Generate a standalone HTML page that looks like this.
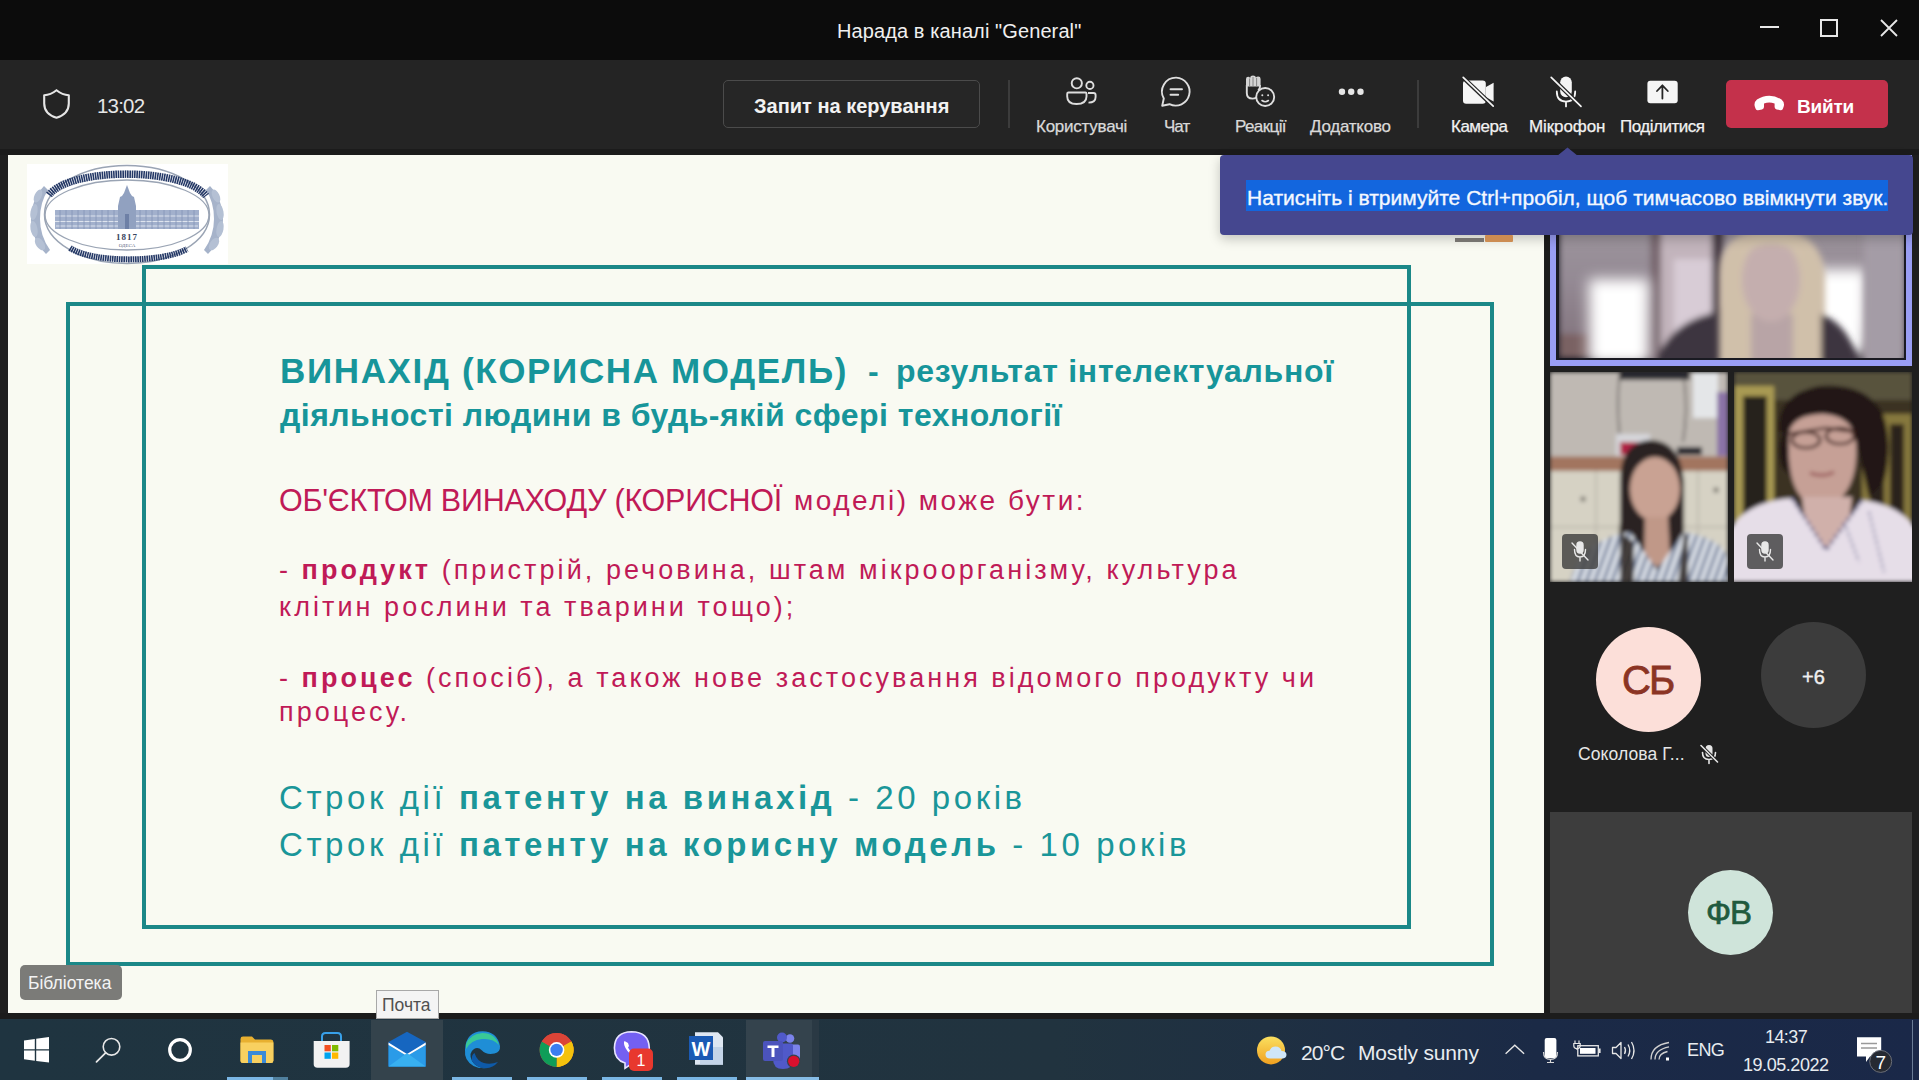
<!DOCTYPE html>
<html><head><meta charset="utf-8">
<style>
*{margin:0;padding:0;box-sizing:border-box}
html,body{width:1919px;height:1080px;overflow:hidden;background:#1f1f1f;font-family:"Liberation Sans",sans-serif;position:relative}
.a{position:absolute}
.t{position:absolute;white-space:nowrap;line-height:1}
svg{position:absolute;overflow:visible}
.lbl{color:#d9d9d9;font-size:17px;top:118px;-webkit-text-stroke:0.25px currentColor}
.teal{color:#17959a;font-weight:700}
.pink{color:#c01a57;font-size:27px;letter-spacing:3.05px}
.str{color:#1a9699;font-size:33px;letter-spacing:3.57px}
</style></head><body>
<!-- title bar -->
<div class="a" style="left:0;top:0;width:1919px;height:60px;background:#0c0c0c"></div>
<div class="t" style="left:837px;top:21px;font-size:20px;color:#f0f0f0;letter-spacing:0.1px">Нарада в каналі "General"</div>
<div class="a" style="left:1760px;top:26px;width:19px;height:2px;background:#e8e8e8"></div>
<div class="a" style="left:1820px;top:19px;width:18px;height:18px;border:2px solid #e8e8e8"></div>
<svg style="left:1880px;top:19px" width="18" height="18" viewBox="0 0 18 18"><path d="M1 1L17 17M17 1L1 17" stroke="#e8e8e8" stroke-width="1.8"/></svg>

<!-- toolbar -->
<div class="a" style="left:0;top:60px;width:1919px;height:89px;background:#242424"></div>
<div class="a" style="left:0;top:149px;width:1919px;height:6px;background:#1b1b1b"></div>
<svg style="left:43px;top:89px" width="27" height="30" viewBox="0 0 27 30"><path d="M13.5 1.2C9.5 4.4 5.5 6 1.2 6.2V14.5C1.2 21.5 5.4 26.3 13.5 28.8C21.6 26.3 25.8 21.5 25.8 14.5V6.2C21.5 6 17.5 4.4 13.5 1.2Z" fill="none" stroke="#e6e6e6" stroke-width="2.1" stroke-linejoin="round"/></svg>
<div class="t" style="left:97px;top:96px;font-size:20.5px;color:#e6e6e6;letter-spacing:-0.8px">13:02</div>
<div class="a" style="left:723px;top:80px;width:257px;height:48px;border:1.5px solid #4b4b4b;border-radius:5px;background:#262626"></div>
<div class="t" style="left:754px;top:96px;font-size:20px;color:#f2f2f2;font-weight:700">Запит на керування</div>
<div class="a" style="left:1008px;top:80px;width:2px;height:48px;background:#3c3c3c"></div>
<div class="a" style="left:1417px;top:80px;width:2px;height:48px;background:#3c3c3c"></div>

<div class="t lbl" style="left:1036px;letter-spacing:-0.25px">Користувачі</div>
<div class="t lbl" style="left:1164px;letter-spacing:-1px">Чат</div>
<div class="t lbl" style="left:1235px;letter-spacing:-0.6px">Реакції</div>
<div class="t lbl" style="left:1310px;letter-spacing:-0.25px">Додатково</div>
<div class="t lbl" style="left:1451px;letter-spacing:-0.5px;color:#f2f2f2">Камера</div>
<div class="t lbl" style="left:1529px;letter-spacing:-0.1px;color:#f2f2f2">Мікрофон</div>
<div class="t lbl" style="left:1620px;letter-spacing:-0.5px;color:#f2f2f2">Поділитися</div>

<!-- leave button -->
<div class="a" style="left:1726px;top:80px;width:162px;height:48px;background:#c4314b;border-radius:5px"></div>
<div class="t" style="left:1797px;top:97px;font-size:19px;color:#fff;font-weight:700;letter-spacing:-0.2px">Вийти</div>


<!-- toolbar icons -->
<svg style="left:0;top:0" width="1919" height="160" viewBox="0 0 1919 160">
 <g fill="none" stroke="#dedede" stroke-width="1.9">
  <circle cx="1076.8" cy="83.3" r="5.1"/>
  <circle cx="1089.9" cy="85.4" r="3.6"/>
  <path d="M1068.5 92.5H1085.3Q1086.5 92.5 1086.5 93.7V96.5Q1086.5 104 1076.5 104Q1067.2 104 1067.2 96.5V93.7Q1067.2 92.5 1068.5 92.5Z"/>
  <path d="M1088 93H1093.5Q1095.6 93 1095.6 95V97Q1095.6 102.6 1088.5 102.6"/>
  <path d="M1176.2 77.6A14 14 0 1 1 1169.5 104.2L1162.2 105.8L1163.8 98.5A14 14 0 0 1 1176.2 77.6Z" stroke-linejoin="round"/>
  <path d="M1170.5 89.3H1182M1170.5 94.8H1178.2" stroke-linecap="round"/>
  <circle cx="1265.2" cy="97" r="9"/>
  <path d="M1262 100.5Q1265.2 103 1268.4 100.5" stroke-linecap="round" stroke-width="1.6"/>
  <path d="M1246.8 85V93Q1246.8 98.6 1252.5 98.6Q1254.6 98.6 1256.2 97.6M1259.9 85V87.2Q1259.9 88.6 1258.2 90.2"/>
 </g>
 <path d="M1246 79Q1246 76.8 1248.2 76.8Q1249.8 76.8 1250 78Q1250.3 75.6 1253 75.6Q1255.6 75.6 1256 77.6Q1256.4 76.6 1258.2 76.6Q1260.6 76.6 1260.6 79V86.5H1246Z" fill="#d4d4d4"/>
 <path d="M1249.6 78.5V86.5M1253 77V86.5M1256.6 78V86.5" stroke="#7a7a7a" stroke-width="0.9"/>
 <circle cx="1262.3" cy="95.3" r="1" fill="#dedede"/><circle cx="1268.1" cy="95.3" r="1" fill="#dedede"/>
 <g fill="#e6e6e6"><circle cx="1342" cy="91.7" r="3.2"/><circle cx="1351.2" cy="91.7" r="3.2"/><circle cx="1360.5" cy="91.7" r="3.2"/></g>
 <!-- camera off -->
 <g fill="#f5f5f5">
  <rect x="1463" y="80.4" width="22.8" height="23.4" rx="3.2"/>
  <path d="M1486 87L1493.6 82.8V101.4L1486 97.2Z"/>
 </g>
 <path d="M1462 76.5L1494 107" stroke="#242424" stroke-width="4.2"/>
 <path d="M1463.2 77.3L1493.2 106.2" stroke="#f5f5f5" stroke-width="1.7" stroke-linecap="round"/>
 <!-- mic off -->
 <rect x="1560.2" y="76.5" width="11.6" height="20.8" rx="5.8" fill="#f5f5f5"/>
 <path d="M1556.8 91.5Q1556.8 101.6 1566 101.6Q1575.2 101.6 1575.2 91.5M1566 101.6V106.4" fill="none" stroke="#f5f5f5" stroke-width="1.8" stroke-linecap="round"/>
 <path d="M1550 76.2L1582 107.2" stroke="#242424" stroke-width="4.2"/>
 <path d="M1551.2 77.3L1581 106.4" stroke="#f5f5f5" stroke-width="1.7" stroke-linecap="round"/>
 <!-- share -->
 <rect x="1647.4" y="80.8" width="30.3" height="22.4" rx="3" fill="#f5f5f5"/>
 <path d="M1662.4 98.6V85.5M1657 91L1662.4 85.4L1667.8 91" fill="none" stroke="#242424" stroke-width="1.8" stroke-linecap="round" stroke-linejoin="round"/>
 <!-- hang up -->
 <path d="M1754.8 106.5Q1753.6 102.5 1757 99.6Q1762.5 95.8 1769.3 95.8Q1776 95.8 1781.5 99.6Q1784.9 102.5 1783.7 106.5L1783 108.6Q1782.5 110.5 1780.5 110.2L1776.6 109.4Q1774.6 109 1774.6 107V103.6Q1771.8 102.6 1769.3 102.6Q1766.7 102.6 1764 103.6V107Q1764 109 1762 109.4L1758 110.2Q1756 110.5 1755.5 108.6Z" fill="#ffffff"/>
</svg>

<!-- slide -->
<div class="a" style="left:8px;top:155px;width:1536px;height:858px;background:#f9faf2"></div>
<div class="a" style="left:142px;top:265px;width:1269px;height:664px;border:4.5px solid #1b8888"></div>
<div class="a" style="left:66px;top:302px;width:1428px;height:664px;border:4px solid #1b8888"></div>


<!-- logo -->
<div class="a" style="left:27px;top:164px;width:201px;height:100px;background:#ffffff"></div>
<svg style="left:0;top:0" width="260" height="280" viewBox="0 0 260 280">
 <g fill="#a6b3ca">
  <path d="M44 186Q31 200 31 220Q32 240 46 254L50 250Q40 236 40 219Q40 202 48 190Z"/>
  <path d="M210 186Q223 200 223 220Q222 240 208 254L204 250Q214 236 214 219Q214 202 206 190Z"/>
 </g>
 <g fill="#b4c0d4">
  <ellipse cx="38" cy="196" rx="3.5" ry="7" transform="rotate(25 38 196)"/><ellipse cx="34" cy="212" rx="3.5" ry="8" transform="rotate(10 34 212)"/><ellipse cx="34" cy="229" rx="3.5" ry="8" transform="rotate(-10 34 229)"/><ellipse cx="40" cy="244" rx="4" ry="7" transform="rotate(-35 40 244)"/>
  <ellipse cx="216" cy="196" rx="3.5" ry="7" transform="rotate(-25 216 196)"/><ellipse cx="220" cy="212" rx="3.5" ry="8" transform="rotate(-10 220 212)"/><ellipse cx="220" cy="229" rx="3.5" ry="8" transform="rotate(10 220 229)"/><ellipse cx="214" cy="244" rx="4" ry="7" transform="rotate(35 214 244)"/>
 </g>
 <ellipse cx="127" cy="214.5" rx="82.5" ry="49" fill="none" stroke="#9aa4b4" stroke-width="1.5"/>
 <path d="M49 195C70 167 184 167 206 196" fill="none" stroke="#243866" stroke-width="7.5" stroke-dasharray="1.6 0.7"/>
 <path d="M70 248C92 263 163 263 187 249" fill="none" stroke="#243866" stroke-width="6" stroke-dasharray="1.6 0.7"/>
 <ellipse cx="127" cy="215" rx="82" ry="35" fill="none" stroke="#9aa4b4" stroke-width="1.3"/>
 <rect x="55" y="210" width="144" height="19" fill="#a2b0cc"/>
 <g stroke="#e4eaf2" stroke-width="0.9"><path d="M55 216H199M55 221.5H199M56 226H198"/></g>
 <g stroke="#8496b8" stroke-width="0.8"><path d="M60 210V229M66 210V229M72 210V229M78 210V229M84 210V229M90 210V229M96 210V229M102 210V229M108 210V229M114 210V229M140 210V229M146 210V229M152 210V229M158 210V229M164 210V229M170 210V229M176 210V229M182 210V229M188 210V229M194 210V229"/></g>
 <path d="M118 229V206L120 197L122 196L124 193L127 185L130 193L132 196L134 197L136 206V229Z" fill="#91a1c0"/>
 <rect x="125" y="214" width="4" height="15" fill="#6e80a6"/>
 <text x="127" y="240" font-family="Liberation Serif" font-size="9" font-weight="700" fill="#3a4660" text-anchor="middle" letter-spacing="1">1817</text>
 <text x="127" y="246.5" font-family="Liberation Serif" font-size="5" fill="#5a6680" text-anchor="middle">ОДЕСА</text>
</svg>
<div class="t teal" style="left:280px;top:352.6px;font-size:35px;letter-spacing:1.65px">ВИНАХІД (КОРИСНА МОДЕЛЬ)</div>
<div class="t teal" style="left:868px;top:354.9px;font-size:32px">-</div>
<div class="t teal" style="left:896px;top:354.9px;font-size:32px;letter-spacing:0.72px">результат інтелектуальної</div>
<div class="t teal" style="left:280px;top:399.4px;font-size:32px;letter-spacing:0.47px">діяльності людини в будь-якій сфері технології</div>

<div class="t" style="left:279px;top:484.7px;font-size:30.5px;color:#c01a57;letter-spacing:-0.25px">ОБ'ЄКТОМ ВИНАХОДУ (КОРИСНОЇ</div>
<div class="t" style="left:794px;top:486.8px;font-size:28px;color:#c01a57;letter-spacing:2.5px">моделі) може бути:</div>
<div class="t pink" style="left:279px;top:557.3px">- <b>продукт</b> (пристрій, речовина, штам мікроорганізму, культура</div>
<div class="t pink" style="left:279px;top:593.8px">клітин рослини та тварини тощо);</div>
<div class="t pink" style="left:279px;top:664.8px">- <b>процес</b> (спосіб), а також нове застосування відомого продукту чи</div>
<div class="t pink" style="left:279px;top:699.4px">процесу.</div>
<div class="t str" style="left:279px;top:781px">Строк дії <b>патенту на винахід</b> - 20 років</div>
<div class="t str" style="left:279px;top:828.1px">Строк дії <b>патенту на корисну модель</b> - 10 років</div>


<!-- right panel -->
<div class="a" style="left:1545px;top:155px;width:374px;height:864px;background:#1f1f1f"></div>
<div class="a" style="left:1545px;top:155px;width:5px;height:858px;background:#1b1b1b"></div>
<!-- top video tile -->
<div class="a" style="left:1550px;top:155px;width:362px;height:211px;background:#9a9ef4"></div>
<div class="a" style="left:1556px;top:161px;width:350px;height:199px;background:#1a1a22"></div>
<svg style="left:1559px;top:164px;overflow:hidden" width="345" height="194" viewBox="0 0 345 194">
 <defs><filter id="b0" x="-20%" y="-20%" width="140%" height="140%"><feGaussianBlur stdDeviation="3"/></filter>
 <filter id="b0s" x="-50%" y="-50%" width="200%" height="200%"><feGaussianBlur stdDeviation="7"/></filter>
 <linearGradient id="wall0" x1="0" y1="0" x2="0" y2="1"><stop offset="0" stop-color="#a8a2a8"/><stop offset="0.6" stop-color="#948a94"/><stop offset="1" stop-color="#80707a"/></linearGradient></defs>
 <g filter="url(#b0)">
  <rect width="345" height="194" fill="url(#wall0)"/>
  <rect x="0" y="170" width="30" height="24" fill="#7a6264"/>
  <rect x="91" y="60" width="11" height="140" fill="#786870"/>
  <rect x="102" y="60" width="54" height="140" fill="#c2b4bc"/>
  <rect x="115" y="95" width="40" height="80" fill="#d8ccd6"/>
  <rect x="153" y="60" width="12" height="140" fill="#463a44"/>
  <path d="M95 200Q110 160 150 150L175 140H280Q300 150 310 200Z" fill="#3e3440"/>
 </g>
 <g filter="url(#b0s)">
  <rect x="30" y="115" width="60" height="85" fill="#ffffff"/>
  <rect x="252" y="105" width="56" height="85" fill="#ffffff"/>
 </g>
 <g filter="url(#b0)">
  <path d="M160 200V110Q160 66 212 64Q262 66 266 110V200Z" fill="#d0c0aa"/>
  <rect x="192" y="150" width="42" height="50" fill="#b8a4a6"/>
  <ellipse cx="212" cy="116" rx="29" ry="42" fill="#c4aeae"/>
  <path d="M180 100Q186 70 212 70Q240 70 246 100Q240 82 212 80Q186 82 180 100Z" fill="#d2c2ac"/>
  <rect x="305" y="60" width="40" height="140" fill="#a49ca6"/>
  <path d="M262 150Q290 160 300 200H262Z" fill="#3e3440"/>
 </g>
</svg>
<!-- tile 2 -->
<svg style="left:1550px;top:372px;overflow:hidden" width="178" height="210" viewBox="0 0 178 210">
 <defs><filter id="b1" x="-10%" y="-10%" width="120%" height="120%"><feGaussianBlur stdDeviation="1.9"/></filter>
 <pattern id="stripe" width="8" height="8" patternUnits="userSpaceOnUse" patternTransform="rotate(20)"><rect width="8" height="8" fill="#e6eaf0"/><rect width="3.5" height="8" fill="#6a7894"/></pattern></defs>
 <g filter="url(#b1)">
  <rect width="178" height="210" fill="#c2bcb6"/>
  <rect x="0" y="0" width="178" height="86" fill="#bfb9b3"/>
  <rect x="69" y="0" width="71" height="8" fill="#2c2c32"/>
  <path d="M70 0Q66 30 70 68M134 6Q138 40 133 70" stroke="#3a3636" stroke-width="1.3" fill="none"/>
  <rect x="143" y="0" width="25" height="46" fill="#e4e6e8"/>
  <rect x="167" y="20" width="11" height="64" fill="#8a72a6"/>
  <rect x="66" y="62" width="34" height="22" fill="#d6d6da"/>
  <rect x="70" y="70" width="20" height="13" fill="#b02444"/>
  <rect x="127" y="75" width="25" height="8" fill="#24242a"/>
  <rect x="0" y="84.5" width="178" height="14.5" fill="#a2745e"/>
  <rect x="0" y="99" width="178" height="111" fill="#d6d2c4"/>
  <path d="M46 99V210M148 99V210M0 155H178" stroke="#b8b4a8" stroke-width="1.5"/>
  <circle cx="33" cy="127" r="2.5" fill="#6a6660"/><circle cx="166" cy="118" r="2.5" fill="#6a6660"/>
  <path d="M70 210V110Q70 70 100 68Q130 68 134 110V210Z" fill="#2c2420"/>
  <path d="M64 210L70 150Q72 120 80 115V210Z" fill="#2c2420"/>
  <ellipse cx="105" cy="117" rx="25" ry="32" fill="#c9a293"/>
  <path d="M80 100Q88 80 108 82Q124 84 130 100V90Q124 72 104 72Q84 74 80 92Z" fill="#2c2420"/>
  <path d="M95 145H118L120 185L107 195L94 185Z" fill="#c09888"/>
  <path d="M20 210Q30 168 80 160L107 198L134 160Q170 166 178 185V210Z" fill="url(#stripe)"/>
  <path d="M70 210V160L84 170V210ZM134 160L128 210H138V165Z" fill="#2c2420" opacity="0.85"/>
 </g>
</svg>
<!-- tile 3 -->
<svg style="left:1734px;top:372px;overflow:hidden" width="178" height="210" viewBox="0 0 178 210">
 <defs><filter id="b2" x="-10%" y="-10%" width="120%" height="120%"><feGaussianBlur stdDeviation="2.3"/></filter></defs>
 <g filter="url(#b2)">
  <rect width="178" height="210" fill="#3a3224"/>
  <rect x="0" y="0" width="178" height="28" fill="#58523e"/>
  <rect x="0" y="14" width="40" height="160" fill="#a89a52"/>
  <rect x="9" y="24" width="24" height="138" fill="#28221a"/>
  <rect x="128" y="42" width="50" height="134" fill="#86783e"/>
  <rect x="136" y="52" width="14" height="115" fill="#2c241a"/>
  <rect x="156" y="52" width="14" height="115" fill="#2c241a"/>
  <path d="M45 60Q42 22 85 14Q130 10 148 40Q160 70 150 110L135 125L120 60Z" fill="#221814"/>
  <path d="M48 95Q40 70 55 50L62 110Z" fill="#221814"/>
  <path d="M55 60Q60 42 90 42Q120 44 122 72Q124 110 105 128Q88 138 70 128Q52 112 55 60Z" fill="#c6a096"/>
  <path d="M55 62L92 56L122 60" stroke="#3a1c18" stroke-width="2.5" fill="none"/>
  <ellipse cx="72" cy="68" rx="14" ry="8" fill="none" stroke="#3a1c18" stroke-width="2.6"/>
  <ellipse cx="106" cy="64" rx="14" ry="8" fill="none" stroke="#3a1c18" stroke-width="2.6"/>
  <path d="M76 101Q90 106 100 100" stroke="#9a5a5a" stroke-width="3" fill="none"/>
  <path d="M68 125H118L114 160L92 178L72 158Z" fill="#d0b0aa"/>
  <path d="M-5 210V160Q10 130 58 126L92 178L128 128Q170 134 183 160V210Z" fill="#e6dee8"/>
  <path d="M58 126L92 178L128 128" fill="none" stroke="#5a5a8a" stroke-width="3" stroke-dasharray="4 3"/>
  <path d="M110 150L125 190M135 140L150 200" stroke="#6a6a96" stroke-width="2" stroke-dasharray="3 3"/>
 </g>
</svg>
<div class="a" style="left:1562px;top:534px;width:36px;height:35px;background:rgba(60,60,60,0.8);border-radius:4px"></div>
<div class="a" style="left:1747px;top:534px;width:36px;height:35px;background:rgba(60,60,60,0.8);border-radius:4px"></div>
<svg style="left:0;top:0" width="1919" height="1080" viewBox="0 0 1919 1080">
 <g fill="none" stroke="#e8e8e8" stroke-width="1.4" stroke-linecap="round">
  <g id="mo"><rect x="1577" y="542" width="6" height="11" rx="3" fill="#e8e8e8"/><path d="M1574.5 549.5Q1574.5 557 1580 557Q1585.5 557 1585.5 549.5M1580 557V561"/><path d="M1572 543L1588 560"/></g>
  <use href="#mo" x="185"/>
 </g>
</svg>
<!-- avatars -->
<div class="a" style="left:1596px;top:627px;width:105px;height:105px;border-radius:50%;background:#fcdfd9"></div>
<div class="t" style="left:1622px;top:660px;font-size:40px;color:#8b3424;letter-spacing:-1.8px;-webkit-text-stroke:0.8px #8b3424">СБ</div>
<div class="a" style="left:1761px;top:622px;width:105px;height:106px;border-radius:50%;background:#3c3c3c"></div>
<div class="t" style="left:1802px;top:667px;font-size:20px;color:#f0f0f0;-webkit-text-stroke:0.4px #f0f0f0">+6</div>
<div class="t" style="left:1578px;top:746px;font-size:17.5px;color:#e6e6e6;letter-spacing:0.1px">Соколова Г...</div>
<svg style="left:0;top:0" width="1919" height="1080" viewBox="0 0 1919 1080">
 <g fill="none" stroke="#e6e6e6" stroke-width="1.6" stroke-linecap="round">
  <rect x="1705.5" y="745" width="7" height="12" rx="3.5" fill="#e6e6e6" stroke="none"/>
  <path d="M1702.5 752.5Q1702.5 759.5 1709 759.5Q1715.5 759.5 1715.5 752.5M1709 759.5V763.5"/>
  <path d="M1700.5 745L1718 762.5" stroke="#1f1f1f" stroke-width="3.2"/>
  <path d="M1701 745.5L1717.5 762"/>
 </g>
</svg>
<div class="a" style="left:1550px;top:812px;width:362px;height:201px;background:#3d3d3d"></div>
<div class="a" style="left:1688px;top:870px;width:85px;height:85px;border-radius:50%;background:#cfe4da"></div>
<div class="t" style="left:1706px;top:896px;font-size:33px;color:#1f5a3e;letter-spacing:-1px;-webkit-text-stroke:0.7px #1f5a3e">ФВ</div>

<!-- tooltip -->
<div class="a" style="left:1220px;top:155px;width:693px;height:80px;background:#45478f;border-radius:4px;box-shadow:0 4px 12px rgba(0,0,0,0.22)"></div>
<svg style="left:1557px;top:147px" width="22" height="9" viewBox="0 0 22 9"><path d="M0 9L10.5 0.5L21 9Z" fill="#45478f"/></svg>
<div class="a" style="left:1246px;top:180px;width:642px;height:31px;background:#1366de"></div>
<div class="t" style="left:1247px;top:186.5px;font-size:21px;color:#f4f8ff;letter-spacing:0.01px;-webkit-text-stroke:0.35px #f4f8ff">Натисніть і втримуйте Ctrl+пробіл, щоб тимчасово ввімкнути звук.</div>


<!-- taskbar -->
<div class="a" style="left:0;top:1013px;width:1919px;height:6px;background:#1c1c1c"></div>
<div class="a" style="left:0;top:1019px;width:1919px;height:61px;background:linear-gradient(90deg,#1f3440 0%,#21333f 55%,#1f3042 66%,#1b2a46 80%,#1a2848 100%)"></div>
<div class="a" style="left:371px;top:1020px;width:72px;height:60px;background:#34434c"></div>
<div class="a" style="left:746px;top:1020px;width:66px;height:60px;background:#34434d"></div>
<div class="a" style="left:812px;top:1020px;width:7px;height:60px;background:#2a3944"></div>
<div class="a" style="left:227px;top:1077px;width:46px;height:3px;background:#7ab6e4"></div>
<div class="a" style="left:273px;top:1077px;width:15px;height:3px;background:#50809e"></div>
<div class="a" style="left:452px;top:1077px;width:60px;height:3px;background:#7ab6e4"></div>
<div class="a" style="left:527px;top:1077px;width:60px;height:3px;background:#7ab6e4"></div>
<div class="a" style="left:602px;top:1077px;width:60px;height:3px;background:#7ab6e4"></div>
<div class="a" style="left:677px;top:1077px;width:60px;height:3px;background:#7ab6e4"></div>
<div class="a" style="left:746px;top:1077px;width:73px;height:3px;background:#86bce6"></div>
<div class="a" style="left:1912px;top:1020px;width:1px;height:60px;background:#6a7c96"></div>
<svg style="left:0;top:0" width="1919" height="1080" viewBox="0 0 1919 1080">
 <!-- windows -->
 <g fill="#ffffff">
  <path d="M24 1040.5L34.8 1039V1049.2H24Z"/><path d="M36.2 1038.8L49 1037V1049.2H36.2Z"/>
  <path d="M24 1050.6H34.8V1060.8L24 1059.3Z"/><path d="M36.2 1050.6H49V1062.6L36.2 1061Z"/>
 </g>
 <!-- search -->
 <circle cx="111.5" cy="1046.8" r="8.3" fill="none" stroke="#e8e8e8" stroke-width="1.6"/>
 <path d="M105.6 1052.8L96.5 1061.8" stroke="#e8e8e8" stroke-width="1.8" stroke-linecap="round"/>
 <!-- cortana -->
 <circle cx="180" cy="1050" r="10.3" fill="none" stroke="#ffffff" stroke-width="3.2"/>
 <!-- explorer -->
 <path d="M240.5 1039Q240.5 1036.6 243 1036.6H252L255 1039.5H271Q273.4 1039.5 273.4 1042V1060.5Q273.4 1063 271 1063H243Q240.5 1063 240.5 1060.5Z" fill="#e8b030"/>
 <path d="M240.5 1042.5H273.4V1060.5Q273.4 1063 271 1063H243Q240.5 1063 240.5 1060.5Z" fill="#f8d060"/>
 <path d="M248 1051H266V1063H262V1055H252V1063H248Z" fill="#3a8ad8"/>
 <rect x="252" y="1057.5" width="10" height="3" fill="#f8d060"/>
 <!-- store -->
 <path d="M313.7 1041H349.6V1064Q349.6 1067.8 345.8 1067.8H317.5Q313.7 1067.8 313.7 1064Z" fill="#f2f2f2"/>
 <path d="M322 1041V1036.5Q322 1033 325.5 1033H337.5Q341 1033 341 1036.5V1041" fill="none" stroke="#38a0e8" stroke-width="2"/>
 <rect x="324.5" y="1045" width="6.3" height="6.3" fill="#f25022"/><rect x="332" y="1045" width="6.3" height="6.3" fill="#7fba00"/>
 <rect x="324.5" y="1052.5" width="6.3" height="6.3" fill="#00a4ef"/><rect x="332" y="1052.5" width="6.3" height="6.3" fill="#ffb900"/>
 <!-- mail -->
 <path d="M388.5 1042L407 1031.8L425.7 1042V1066.6H388.5Z" fill="#1666c0"/>
 <path d="M388.5 1045L407 1056L425.7 1045V1066.6H388.5Z" fill="#2a9be8"/>
 <path d="M388.5 1042.5L407 1054L425.7 1042.5L425.7 1045L407 1056L388.5 1045Z" fill="#ffffff"/>
 <path d="M388.5 1066.6L407 1053L425.7 1066.6Z" fill="#38b0f0"/>
 <!-- edge -->
 <path d="M465 1049.5Q466 1031.5 482.5 1031.3Q497 1031.5 500 1046Q500.5 1052 494.5 1053.5Q486 1055 482 1050.5Q478 1046.5 474 1049Q468 1053 472 1061Q476 1068 486 1068.2Q472 1069 466.5 1059Q464.5 1055 465 1049.5Z" fill="#1f8ed6"/>
 <path d="M466 1044Q470 1034 482.5 1033Q495 1033 499 1045Q493 1038 482 1039Q471 1040 466 1049Z" fill="#3ccf90" opacity="0.9"/>
 <path d="M472 1061Q476 1068 486 1068.2Q493 1068 498 1062Q490 1065 484 1063Q477 1061 474.5 1053Q471 1055 472 1061Z" fill="#0e5aa8"/>
 <!-- chrome -->
 <circle cx="556.6" cy="1049.9" r="17" fill="#db4437"/>
 <path d="M556.6 1049.9L571.3 1041.4A17 17 0 0 1 556.6 1066.9Z" fill="#f4c20d"/>
 <path d="M556.6 1049.9L556.6 1066.9A17 17 0 0 1 541.9 1041.4Z" fill="#0f9d58"/>
 <path d="M556.6 1049.9L541.9 1041.4A17 17 0 0 1 571.3 1041.4Z" fill="#db4437"/>
 <path d="M564 1045.6L571.3 1041.4A17 17 0 0 1 556.6 1066.9L563.8 1054.4Z" fill="#f4c20d"/>
 <circle cx="556.6" cy="1049.9" r="7.8" fill="#ffffff"/>
 <circle cx="556.6" cy="1049.9" r="6.2" fill="#3b7ef0"/>
 <!-- viber -->
 <path d="M631.5 1031.8Q648.8 1032 649.3 1048Q649 1063 632 1063.5L625 1068.3V1063Q614.5 1060 614.4 1048Q614.8 1032 631.5 1031.8Z" fill="#7360f2" stroke="#e8e4ff" stroke-width="1.6"/>
 <path d="M624.5 1041Q623 1043 625.5 1048Q628.5 1053.5 634 1056Q636.5 1057 638 1055L637 1052.5L634 1051.5L632.5 1052.5Q629.5 1051 628 1047.5L629 1046L628 1043Z" fill="#ffffff"/>
 <rect x="629" y="1048.5" width="24" height="22.4" rx="5" fill="#e8382e"/>
 <text x="641" y="1066" font-family="Liberation Sans" font-size="16" fill="#ffffff" text-anchor="middle">1</text>
 <!-- word -->
 <path d="M695 1032.3H718L723 1037.3V1064.8H695Z" fill="#dfe7f2"/>
 <path d="M700 1047H723V1064.8H700Z" fill="#b8cce4" opacity="0.7"/>
 <path d="M689 1036H713V1060H689Z" fill="#1b5ab4"/>
 <text x="701" y="1056" font-family="Liberation Sans" font-size="20" font-weight="700" fill="#ffffff" text-anchor="middle">W</text>
 <!-- teams -->
 <circle cx="790" cy="1038.5" r="4.3" fill="#7b83eb"/>
 <circle cx="782" cy="1037.5" r="5" fill="#5059c9"/>
 <path d="M784 1044.5H798Q800 1044.5 800 1046.5V1056Q800 1063 793 1063Q786 1063 784 1056Z" fill="#7b83eb"/>
 <path d="M773 1043.5H791Q793 1043.5 793 1045.5V1059Q793 1069 783 1069Q773 1069 773 1059Z" fill="#5059c9"/>
 <rect x="763" y="1041" width="20" height="20" rx="2" fill="#4b53bc"/>
 <path d="M767.5 1045.5H778.5V1048H774.5V1057H771.5V1048H767.5Z" fill="#ffffff"/>
 <circle cx="793.7" cy="1061.3" r="6.8" fill="#34434d"/>
 <circle cx="793.7" cy="1061.3" r="5.6" fill="#d9102e"/>
 <!-- weather -->
 <defs><linearGradient id="sun" x1="0" y1="0" x2="0" y2="1"><stop offset="0" stop-color="#fae060"/><stop offset="1" stop-color="#f0a020"/></linearGradient></defs>
 <circle cx="1271" cy="1050.4" r="14" fill="url(#sun)"/>
 <path d="M1270 1058.5Q1265.5 1058.5 1265.5 1054.5Q1265.5 1051 1269.5 1050.8Q1271 1046.5 1275.5 1046.5Q1280.5 1046.5 1281.5 1051Q1286.5 1051 1286.5 1054.8Q1286.5 1058.5 1282 1058.5Z" fill="#cfe6f8"/>
 <!-- tray -->
 <path d="M1505.6 1053.7L1514.8 1045.2L1524.1 1053.7" fill="none" stroke="#e6e6e6" stroke-width="1.4"/>
 <rect x="1544.7" y="1038" width="11.7" height="20.2" rx="2" fill="#ffffff"/>
 <path d="M1543.5 1052Q1543.5 1059.5 1550.5 1059.5Q1557.5 1059.5 1557.5 1052M1550.5 1059.5V1062.5M1547 1062.5H1554" fill="none" stroke="#d8d8d8" stroke-width="1.2"/>
 <rect x="1577.8" y="1045.7" width="20.5" height="10.2" fill="none" stroke="#e6e6e6" stroke-width="1.3"/>
 <rect x="1599" y="1048.5" width="1.6" height="4.5" fill="#e6e6e6"/>
 <rect x="1580" y="1048" width="15.5" height="5.8" fill="#ffffff"/>
 <path d="M1575 1040.5V1043.5M1579 1040.5V1043.5M1573.8 1043.5H1580.2V1046Q1580.2 1048.5 1577 1048.5Q1573.8 1048.5 1573.8 1046ZM1577 1048.5V1050" fill="none" stroke="#e6e6e6" stroke-width="1.2"/>
 <path d="M1612.5 1047.5H1616L1621 1042.5V1058.5L1616 1053.5H1612.5Z" fill="none" stroke="#e6e6e6" stroke-width="1.3" stroke-linejoin="round"/>
 <path d="M1624.5 1047Q1626.5 1050.5 1624.5 1054M1628 1044.5Q1631.5 1050.5 1628 1056.5M1631.5 1042Q1636.5 1050.5 1631.5 1059" fill="none" stroke="#e6e6e6" stroke-width="1.3"/>
 <path d="M1651 1059.5Q1651 1045.5 1669 1042.5M1655 1059.5Q1655 1049.5 1669 1046.8M1659 1059.5Q1659 1053.5 1667.5 1051.5" fill="none" stroke="#d0d0d0" stroke-width="1.3"/>
 <rect x="1666" y="1057.5" width="3" height="3" fill="#ffffff"/>
 <!-- notification -->
 <path d="M1857 1037.2H1881.2V1056.5H1870L1866 1062V1056.5H1857Z" fill="#ffffff"/>
 <path d="M1861 1043.5H1877M1861 1048H1877" stroke="#9a9a9a" stroke-width="1.4"/>
 <circle cx="1880.7" cy="1061.4" r="11" fill="#262a32" stroke="#6a6e78" stroke-width="1"/>
 <text x="1880.7" y="1068.5" font-family="Liberation Sans" font-size="19" fill="#ffffff" text-anchor="middle">7</text>
</svg>
<div class="t" style="left:1301px;top:1042px;font-size:21px;color:#e8ecf0;letter-spacing:-0.9px">20°C</div>
<div class="t" style="left:1358px;top:1042px;font-size:21px;color:#e8ecf0;letter-spacing:-0.15px">Mostly sunny</div>
<div class="t" style="left:1687px;top:1041px;font-size:18px;color:#e8ecf0;letter-spacing:-0.6px">ENG</div>
<div class="t" style="left:1765px;top:1028px;font-size:18px;color:#e8ecf0;letter-spacing:-0.6px">14:37</div>
<div class="t" style="left:1743px;top:1056px;font-size:18px;color:#e8ecf0;letter-spacing:-0.45px">19.05.2022</div>
<!-- tooltips -->
<div class="a" style="left:20px;top:965px;width:102px;height:35px;background:#7b7b78;border-radius:5px"></div>
<div class="t" style="left:28px;top:974.5px;font-size:17.5px;color:#f4f4f4">Бібліотека</div>
<div class="a" style="left:376px;top:990px;width:63px;height:29px;background:#f4f4f4;border:1px solid #a8a8a8"></div>
<div class="t" style="left:382px;top:997px;font-size:17.5px;color:#505050">Почта</div>
<!-- university logo -->
<div class="a" style="left:1485px;top:235px;width:28px;height:7px;background:#cc8c52;border-radius:1px"></div>
<div class="a" style="left:1455px;top:237.5px;width:29px;height:4.5px;background:#5a5654;opacity:0.8"></div>

</body></html>
